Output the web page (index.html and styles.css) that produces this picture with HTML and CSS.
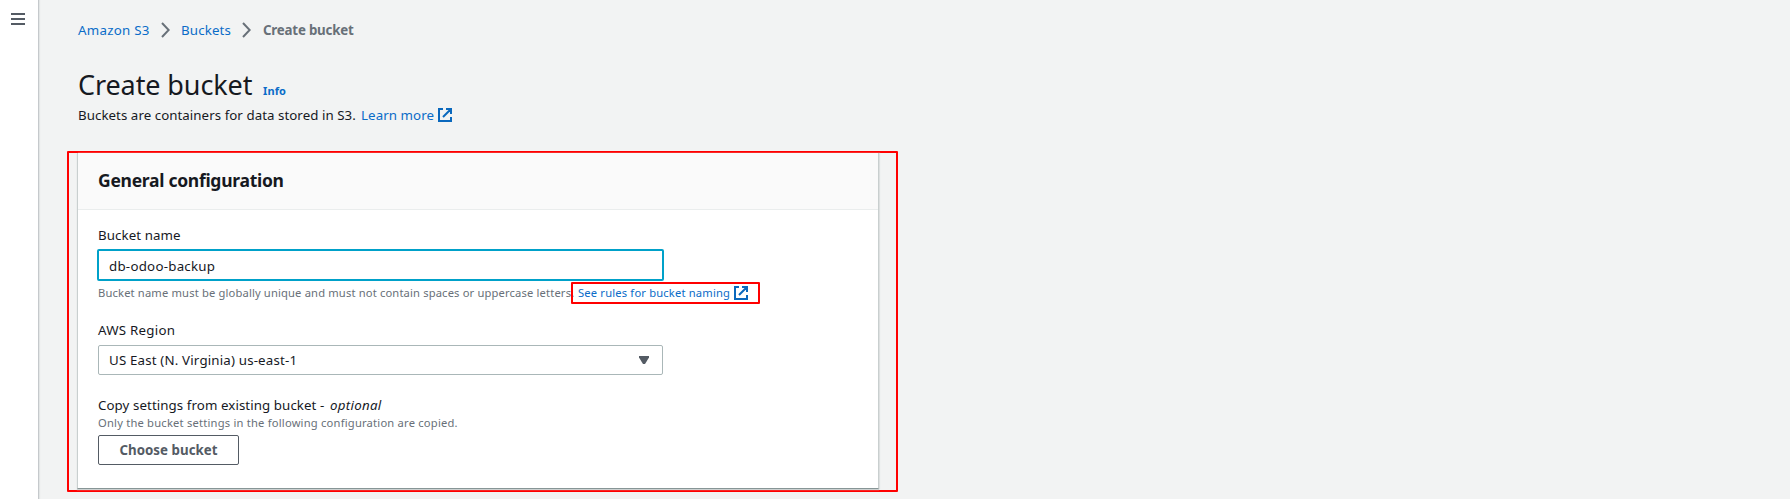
FILE: index.html
```
<!DOCTYPE html>
<html lang="en">
<head>
<meta charset="utf-8">
<title>Create bucket</title>
<link rel="stylesheet" href="styles.css">
</head>
<body>
<div class="layout">
  <aside class="rail">
    <svg class="menu-icon" width="14" height="12" viewBox="0 0 14 12"><path d="M0 1h14M0 6h14M0 11h14" stroke="#545b64" stroke-width="2"/></svg>
  </aside>
  <main class="content">
    <nav class="crumbs">
      <a class="crumb-first">Amazon S3</a>
      <svg class="chevron" width="9" height="16" viewBox="0 0 9 16"><path d="M1 1l6.7 7L1 15" fill="none" stroke="#687078" stroke-width="2"/></svg>
      <a class="crumb-second">Buckets</a>
      <svg class="chevron" width="9" height="16" viewBox="0 0 9 16"><path d="M1 1l6.7 7L1 15" fill="none" stroke="#687078" stroke-width="2"/></svg>
      <span class="crumb-current">Create bucket</span>
    </nav>
    <header class="title-row">
      <h1>Create bucket</h1>
      <a class="info">Info</a>
    </header>
    <p class="intro"><span class="intro-text">Buckets are containers for data stored in S3.</span><a class="learn">Learn more</a><svg class="external" width="14" height="14" viewBox="0 0 14 14"><path d="M5 1H1v12h12V9M8 1h5v5M13 1L5 9" fill="none" stroke="#0a68bd" stroke-width="2"/></svg></p>
    <div class="outline">
      <section class="card">
        <h2><span>General configuration</span></h2>
        <div class="card-body">
          <label class="label label-name">Bucket name</label>
          <div class="input"><span>db-odoo-backup</span></div>
          <div class="hint-row">
            <span class="hint hint-name">Bucket name must be globally unique and must not contain spaces or uppercase letters.</span>
            <div class="rules"><a>See rules for bucket naming</a><svg class="external" width="14" height="14" viewBox="0 0 14 14"><path d="M5 1H1v12h12V9M8 1h5v5M13 1L5 9" fill="none" stroke="#0a68bd" stroke-width="2"/></svg></div>
          </div>
          <label class="label label-region">AWS Region</label>
          <div class="select"><span>US East (N. Virginia) us-east-1</span><svg width="10" height="8" viewBox="0 0 10 8"><path d="M0 0h10v1.5L6 8H4L0 1.5z" fill="#545b64"/></svg></div>
          <label class="label label-copy"><span>Copy settings from existing bucket -</span><i>optional</i></label>
          <p class="hint hint-copy">Only the bucket settings in the following configuration are copied.</p>
          <button class="choose">Choose bucket</button>
        </div>
      </section>
    </div>
  </main>
</div>
</body>
</html>
```
FILE: styles.css
```
* { box-sizing: border-box; }
body {
  margin: 0;
  background: #f2f3f3;
  color: #16191f;
  font: 13.3px/22px "Noto Sans", "Open Sans", sans-serif;
  letter-spacing: 0.08px;
  white-space: nowrap;
  overflow: hidden;
}
a { color: #0a6cc8; }
svg { display: block; flex: none; }
h1, h2, p { margin: 0; font-weight: 400; }
.layout { display: flex; height: 499px; }
.rail {
  width: 38px;
  flex: none;
  background: #fff;
  box-shadow: 1px 0 0 #c5c9cc, 2px 0 1px #e3e6e6;
  padding: 13px 0 0 11px;
}
.content { flex: 1; padding: 19px 0 0 29px; }
.crumbs { display: flex; height: 22px; padding-left: 11px; }
.chevron { margin-top: 3px; }
.crumb-first { width: 83px; letter-spacing: 0.27px; }
.crumb-second { width: 61px; margin-left: 11px; letter-spacing: 0.15px; }
.crumb-current { margin-left: 12px; color: #687078; font-weight: 700; letter-spacing: -0.2px; }
.title-row { display: flex; height: 36px; margin-top: 26px; padding-left: 11px; }
h1 { width: 185px; font-size: 27px; line-height: 36px; letter-spacing: -0.1px; }
.info { font-size: 11px; line-height: 16px; font-weight: 700; letter-spacing: 0.1px; margin-top: 16px; }
.intro { display: flex; height: 22px; margin-top: 1px; padding-left: 11px; }
.intro-text { width: 283px; letter-spacing: 0.05px; }
.learn { width: 77px; }
.intro .external { margin-top: 4px; }
.outline {
  width: 831px;
  height: 341px;
  margin-top: 25px;
  border: 2px solid #f00;
  border-radius: 1px;
  padding: 0 17px 0 8px;
}
.card {
  width: 802px;
  height: 336px;
  background: #fff;
  border: solid #c9cfcf;
  border-width: 0 1px 1px;
  border-bottom-color: #879596;
  box-shadow: 0 1px 1px #ccd2d2, 1px 0 1px #e0e3e3;
}
h2 {
  height: 57px;
  padding: 15px 0 0 20px;
  background: #fafafa;
  border-bottom: 1px solid #eaeded;
  font-size: 17.5px;
  line-height: 24px;
  font-weight: 700;
  letter-spacing: -0.28px;
}
.card-body { padding: 14px 0 0 20px; }
.label { display: block; height: 22px; }
.input {
  width: 567px;
  height: 32px;
  margin: 3px 0 0 -1px;
  border: 2px solid #00a1c9;
  border-radius: 2px;
  padding: 4px 0 0 10px;
  letter-spacing: 0.25px;
}
.hint-row { display: flex; height: 22px; margin-top: 1px; }
.hint { font-size: 11.2px; line-height: 16px; color: #687078; letter-spacing: 0.15px; }
.hint-name { width: 473px; padding-top: 3px; }
.rules {
  display: flex;
  width: 189px;
  height: 22px;
  border: 2px solid #f00;
  border-radius: 1px;
  padding-left: 5px;
  font-size: 11.2px;
  line-height: 18px;
  letter-spacing: 0.17px;
}
.rules a { width: 156px; }
.rules .external { margin-top: 2px; }
.label-region { margin-top: 15px; letter-spacing: 0.25px; }
.select {
  display: flex;
  width: 565px;
  height: 30px;
  margin-top: 4px;
  border: 1px solid #aab7b8;
  border-radius: 2px;
  padding: 3px 13px 0 10px;
  justify-content: space-between;
  letter-spacing: 0.17px;
}
.select svg { margin-top: 7px; }
.label-copy { display: flex; margin-top: 19px; }
.label-copy span { width: 232px; }
.label-copy i { letter-spacing: 0.3px; }
.hint-copy { margin-top: -1px; letter-spacing: 0.2px; }
.choose {
  display: block;
  width: 141px;
  height: 30px;
  margin-top: 4px;
  padding: 0;
  background: #fff;
  border: 1px solid #545b64;
  border-radius: 2px;
  color: #545b64;
  font: 700 13.3px/22px "Noto Sans", "Open Sans", sans-serif;
  letter-spacing: 0.03px;
}
```
